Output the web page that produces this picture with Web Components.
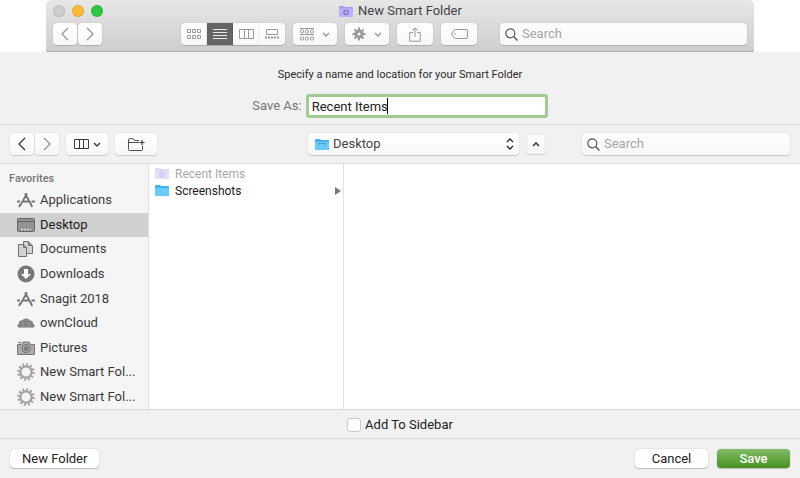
<!DOCTYPE html>
<html lang="en">
<head>
<meta charset="utf-8">
<title>New Smart Folder</title>
<style>
  body {
    margin: 0;
    background: #fff;
    color: #2b2b2b;
    font: 13px/16px Roboto, "Liberation Sans", sans-serif;
  }
</style>
</head>
<body>
<smart-folder-app></smart-folder-app>

<script>
// name: [width, height, svg content]
const ICONS = {
  back: [8, 14, '<path d="M7 1 1 7l6 6" fill="none" stroke="currentColor" stroke-width="1.4"/>'],
  forward: [8, 14, '<path d="m1 1 6 6-6 6" fill="none" stroke="currentColor" stroke-width="1.4"/>'],
  down: [8, 5, '<path d="m1 1 3 3 3-3" fill="none" stroke="currentColor" stroke-width="1.4"/>'],
  up: [8, 5, '<path d="m1 4 3-3 3 3" fill="none" stroke="currentColor" stroke-width="1.6"/>'],
  updown: [8, 12, '<path d="m1 4 3-3 3 3M1 8l3 3 3-3" fill="none" stroke="currentColor" stroke-width="1.4"/>'],
  grid: [14, 10, '<path d="M.5.5h3v3h-3zM5.5.5h3v3h-3zM10.5.5h3v3h-3zM.5 6.5h3v3h-3zM5.5 6.5h3v3h-3zM10.5 6.5h3v3h-3z" fill="none" stroke="currentColor"/>'],
  list: [14, 10, '<path d="M0 .5h14M0 3.5h14M0 6.5h14M0 9.5h14" stroke="currentColor"/>'],
  columns: [15, 10, '<path d="M.5.5h14v9H.5zM5.5.5v9M9.5.5v9" fill="none" stroke="currentColor"/>'],
  gallery: [14, 10, '<path d="M1.5.5h11v5h-11z" fill="none" stroke="currentColor"/><path d="M0 8.5h14" stroke="currentColor" stroke-width="2" stroke-dasharray="2 1"/>'],
  group: [14, 13, '<path d="M0 .5h14M0 6.5h14" stroke="currentColor"/><g fill="none" stroke="currentColor"><rect x=".5" y="2" width="3" height="3" rx="1"/><rect x="5.5" y="2" width="3" height="3" rx="1"/><rect x="10.5" y="2" width="3" height="3" rx="1"/><rect x=".5" y="9" width="3" height="3" rx="1"/><rect x="5.5" y="9" width="3" height="3" rx="1"/><rect x="10.5" y="9" width="3" height="3" rx="1"/></g>'],
  gear: [14, 14, '<path d="M7 .5v13M.5 7h13M2.4 2.4l9.2 9.2M11.6 2.4l-9.2 9.2" stroke="currentColor" stroke-width="2"/><circle cx="7" cy="7" r="3.4" fill="none" stroke="currentColor" stroke-width="2.4"/><circle cx="7" cy="7" r="1.6" fill="#fafafa"/>'],
  share: [12, 15, '<path d="M4 5.5H.8v8.700h10.400V5.5H8M6 10V1M3.5 3.5 6 1l2.5 2.5" fill="none" stroke="currentColor"/>'],
  tag: [17, 10, '<path d="M4.5.5H15q1.5 0 1.5 1.5v6q0 1.5-1.5 1.5H4.5Q3.5 9.5 2.5 8L.5 5l2-3q1-1.5 2-1.5z" fill="none" stroke="currentColor"/><circle cx="4" cy="5" r=".8" fill="currentColor"/>'],
  search: [13, 13, '<circle cx="5.3" cy="5.3" r="4.5" fill="none" stroke="currentColor" stroke-width="1.2"/><path d="m8.6 8.6 3.8 3.8" stroke="currentColor" stroke-width="1.4"/>'],
  newfolder: [17, 13, '<path d="M11 2.5H6.5L5.5.8h-4q-1 0-1 1v9.700q0 1 1 1h12q1 0 1-1V8M.5 4.5H11" fill="none" stroke="currentColor" stroke-width=".9"/><path d="M14 2v5M11.5 4.5h5" stroke="currentColor" stroke-width="1.2"/>'],
  arrow: [6, 8, '<path d="m0 0 6 4-6 4z" fill="currentColor"/>'],
  folder: [16, 13, '<path d="M1 3V2q0-1 1-1h4l1 1h7q1 0 1 1v8q0 1-1 1H2q-1 0-1-1z" fill="#46b4e8"/><path d="M1 4h14v7q0 1-1 1H2q-1 0-1-1z" fill="#6bcbf8"/>'],
  desktopfolder: [16, 13, '<path d="M1 3V2q0-1 1-1h4l1 1h7q1 0 1 1v8q0 1-1 1H2q-1 0-1-1z" fill="#46b4e8"/><path d="M1 4h14v7q0 1-1 1H2q-1 0-1-1z" fill="#6bcbf8"/><path d="M4 5.5h8" stroke="#3fa3d9"/><path d="M4.5 6v2.500M11.5 6v2.500" stroke="#57b7e8"/>'],
  smart: [16, 13, '<path d="M1 3V2q0-1 1-1h4l1 1h7q1 0 1 1v8q0 1-1 1H2q-1 0-1-1z" fill="#a79cea"/><path d="M1 3.5h14V11q0 1-1 1H2q-1 0-1-1z" fill="#bdb2fa"/><circle cx="8" cy="7.5" r="2.100" fill="none" stroke="#8172d8" stroke-width="1.4"/>'],
  apps: [18, 16, '<g fill="none" stroke="currentColor" stroke-width="1.8"><path d="M8 1.5 13.8 12M10 1.5 3.2 13.5"/><path d="M0 9.5h3M6 9.5h6M14.5 9.5H18"/><path d="m13.5 11.5 1.700 3.5M3.5 12l-1.5 3"/></g><path d="M7 5.5h4" stroke="currentColor"/>'],
  desktop: [18, 16, '<rect x=".5" y="1.5" width="17" height="13" rx="1" fill="#929292" stroke="#666"/><path d="M1 4.5h16" stroke="#666"/><path d="M4 12.5h10" stroke="#ddd" stroke-width="1.5" stroke-dasharray="2 1"/>'],
  documents: [18, 16, '<g fill="#d2d2d2" stroke="#707070"><path d="M6.5.5h5l4 4v8h-9z"/><path d="M11.5.5v4h4" fill="#999"/><path d="M1.5 3.5h5l3 3v9h-8z"/><path d="M6.5 3.5v3h3" fill="#999"/></g>'],
  downloads: [18, 18, '<circle cx="9" cy="9" r="8.500" fill="#777"/><path d="M7 4h4v5h3l-5 5-5-5h3z" fill="#fff"/>'],
  cloud: [18, 10, '<g fill="#838383"><circle cx="9" cy="4.500" r="4"/><circle cx="4.800" cy="5" r="2.800"/><circle cx="13.200" cy="5.200" r="2.800"/><circle cx="2.300" cy="7.700" r="1.900"/><circle cx="15.700" cy="7.700" r="1.900"/><path d="M2.300 5.500h13.400v4.100H2.300z"/></g><path d="M6.200 3.500q-1.800 2.500 0 5M12 4q1.500 2 0 4" fill="none" stroke="#ababab" stroke-width=".7"/>'],
  camera: [18, 14, '<path d="M.5 3.5h4L6 1h6l1.5 2.5h4v10H.5z" fill="#aaa" stroke="#777"/><path d="M1.5 1.5h2.5" stroke="#777" stroke-width="1.5"/><circle cx="9" cy="7.5" r="4" fill="#bbb" stroke="#666"/><circle cx="9" cy="7.5" r="2" fill="#888" stroke="#666"/>'],
  cog: [18, 18, '<circle cx="9" cy="9" r="7.6" fill="none" stroke="currentColor" stroke-width="2.4" stroke-dasharray="2 1.980"/><circle cx="9" cy="9" r="5.6" fill="none" stroke="currentColor" stroke-width="2.2"/>'],
};

function icon(name) {
  const [w, h, body] = ICONS[name];
  return `<svg width="${w}" height="${h}" viewBox="0 0 ${w} ${h}" aria-hidden="true">${body}</svg>`;
}

class MacIcon extends HTMLElement {
  constructor() {
    super();
    this.attachShadow({ mode: 'open' });
  }

  connectedCallback() {
    this.shadowRoot.innerHTML = `
      <style>
        :host { display: inline-flex; flex: none; align-items: center; justify-content: center; }
        svg { display: block; }
      </style>
      ${icon(this.getAttribute('name'))}
    `;
  }
}

class ToolButton extends HTMLElement {
  constructor() {
    super();
    this.attachShadow({ mode: 'open' });
  }

  connectedCallback() {
    const label = this.getAttribute('label') || '';
    this.shadowRoot.innerHTML = `
      <style>
        :host { display: block; flex: none; width: 24px; height: 22px; color: #999; }
        :host([wide]) { width: 36px; }
        :host([menu]) { width: 44px; }
        :host([view]) { width: 26px; }
        :host([dark]) { color: #3c3c3c; }
        button {
          display: flex;
          align-items: center;
          justify-content: center;
          gap: 8px;
          width: 100%;
          height: 100%;
          padding: 0;
          border: 0;
          border-radius: 4px;
          color: inherit;
          background: linear-gradient(#fff, #f7f7f7);
          box-shadow: 0 0 1px rgba(0, 0, 0, 0.3), 0 1px 1px rgba(0, 0, 0, 0.14);
        }
        :host([tight]) button { gap: 4px; }
        :host([view]) button { border-radius: 0; }
        :host([view="first"]) button { border-radius: 4px 0 0 4px; }
        :host([view="last"]) button { border-radius: 0 4px 4px 0; }
        :host([pressed]) button { background: #656565; color: #e8e8e8; }
      </style>
      <button type="button" aria-label="${label}"><slot></slot></button>
    `;
  }
}

class PushButton extends HTMLElement {
  constructor() {
    super();
    this.attachShadow({ mode: 'open' });
  }

  connectedCallback() {
    this.shadowRoot.innerHTML = `
      <style>
        :host { display: block; }
        button {
          min-width: 73px;
          height: 19px;
          padding: 0 12px;
          border: 0;
          border-radius: 4px;
          font: inherit;
          color: #222;
          background: #fff;
          box-shadow: 0 0 1px rgba(0, 0, 0, 0.35), 0 1px 1px rgba(0, 0, 0, 0.18);
        }
        :host([primary]) button {
          color: #fff;
          font-weight: 500;
          background: linear-gradient(#84bd68, #45911f);
        }
      </style>
      <button type="button"><slot></slot></button>
    `;
  }
}

class SearchField extends HTMLElement {
  constructor() {
    super();
    this.attachShadow({ mode: 'open' });
  }

  connectedCallback() {
    this.shadowRoot.innerHTML = `
      <style>
        :host { display: block; min-width: 0; }
        label {
          display: flex;
          align-items: center;
          gap: 4px;
          height: 22px;
          padding: 0 5px;
          border-radius: 4px;
          color: #555;
          background: linear-gradient(#fdfdfd, #f8f8f8);
          box-shadow: 0 0 1px rgba(0, 0, 0, 0.3), 0 1px 1px rgba(0, 0, 0, 0.14);
        }
        input {
          flex: 1;
          min-width: 0;
          padding: 0;
          border: 0;
          outline: 0;
          background: none;
          font: inherit;
        }
        input::placeholder { color: #a6a6a6; opacity: 1; }
      </style>
      <label>
        <mac-icon name="search"></mac-icon>
        <input type="text" placeholder="Search" aria-label="Search">
      </label>
    `;
  }
}

class FinderHeader extends HTMLElement {
  constructor() {
    super();
    this.attachShadow({ mode: 'open' });
  }

  connectedCallback() {
    this.shadowRoot.innerHTML = `
      <style>
        :host {
          display: block;
          margin: 0 46px;
          padding: 0 7px 6px;
          border-bottom: 1px solid #b4b4b4;
          border-radius: 5px 5px 0 0;
          background: linear-gradient(#e7e7e7, #cecece);
        }
        .title {
          display: grid;
          grid-template-columns: 1fr auto 1fr;
          align-items: center;
          height: 22px;
          margin-bottom: 1px;
          color: #444;
        }
        .lights, .name, .tools, .group { display: flex; align-items: center; }
        .lights { gap: 7px; }
        .lights i {
          box-sizing: border-box;
          width: 12px;
          height: 12px;
          border-radius: 50%;
          border: 1px solid rgba(0, 0, 0, 0.1);
          background: #cdcdcd;
        }
        .lights .min { background: #fdb937; }
        .lights .max { background: #2bc840; }
        .name { gap: 4px; }
        .tools { gap: 8px; }
        .group { gap: 1px; }
        .views { gap: 0; margin-left: 71px; }
        search-field { flex: 1; margin-left: 15px; }
      </style>
      <div class="title">
        <div class="lights"><i></i><i class="min"></i><i class="max"></i></div>
        <div class="name"><mac-icon name="smart"></mac-icon><slot></slot></div>
      </div>
      <div class="tools">
        <div class="group">
          <tool-button label="Back"><mac-icon name="back"></mac-icon></tool-button>
          <tool-button label="Forward"><mac-icon name="forward"></mac-icon></tool-button>
        </div>
        <div class="group views">
          <tool-button view="first" label="Icons"><mac-icon name="grid"></mac-icon></tool-button>
          <tool-button view="mid" pressed label="List"><mac-icon name="list"></mac-icon></tool-button>
          <tool-button view="mid" label="Columns"><mac-icon name="columns"></mac-icon></tool-button>
          <tool-button view="last" label="Gallery"><mac-icon name="gallery"></mac-icon></tool-button>
        </div>
        <tool-button menu label="Group"><mac-icon name="group"></mac-icon><mac-icon name="down"></mac-icon></tool-button>
        <tool-button menu label="Action"><mac-icon name="gear"></mac-icon><mac-icon name="down"></mac-icon></tool-button>
        <tool-button wide label="Share"><mac-icon name="share"></mac-icon></tool-button>
        <tool-button wide label="Tags"><mac-icon name="tag"></mac-icon></tool-button>
        <search-field></search-field>
      </div>
    `;
  }
}

class SaveName extends HTMLElement {
  constructor() {
    super();
    this.attachShadow({ mode: 'open' });
  }

  connectedCallback() {
    this.shadowRoot.innerHTML = `
      <style>
        :host { display: block; padding: 15px 10px 6px; text-align: center; }
        p { margin: 0 0 11px; font-size: 11px; }
        .row { display: flex; align-items: center; justify-content: center; gap: 4px; }
        label { color: #777; }
        .field { position: relative; }
        input {
          display: block;
          box-sizing: border-box;
          width: 242px;
          height: 24px;
          padding: 0 3px;
          border: 3px solid #a2cb94;
          border-radius: 3px;
          outline: 0;
          background: #fff;
          color: #222;
          font: inherit;
        }
        .caret {
          position: absolute;
          top: 4px;
          left: 81px;
          width: 1px;
          height: 16px;
          background: #000;
        }
      </style>
      <p>Specify a name and location for your Smart Folder</p>
      <div class="row">
        <label for="name">Save As:</label>
        <div class="field">
          <input id="name" type="text" value="Recent Items">
          <span class="caret"></span>
        </div>
      </div>
    `;
  }
}

class LocationBar extends HTMLElement {
  constructor() {
    super();
    this.attachShadow({ mode: 'open' });
  }

  connectedCallback() {
    this.shadowRoot.innerHTML = `
      <style>
        :host {
          display: grid;
          grid-template-columns: 298fr 274fr 208fr;
          align-items: center;
          padding: 8px 10px;
          border-top: 1px solid #d9dcd9;
          border-bottom: 1px solid #dedede;
        }
        div { display: flex; align-items: center; }
        .left { gap: 7px; }
        .left tool-button[menu] { width: 42px; }
        .nav { gap: 1px; }
        .middle { gap: 8px; padding-right: 37px; }
        .popup { position: relative; flex: 1; }
        .popup mac-icon { position: absolute; left: 6px; pointer-events: none; }
        .popup mac-icon[name="updown"] { left: auto; right: 5px; }
        select {
          appearance: none;
          width: 100%;
          height: 22px;
          padding: 0 20px 0 25px;
          border: 0;
          border-radius: 4px;
          color: #444;
          background: linear-gradient(#fff, #f8f8f8);
          box-shadow: 0 0 1px rgba(0, 0, 0, 0.3), 0 1px 1px rgba(0, 0, 0, 0.14);
          font: inherit;
        }
        .up { width: 18px; height: 19px; }
      </style>
      <div class="left">
        <div class="nav">
          <tool-button dark label="Back"><mac-icon name="back"></mac-icon></tool-button>
          <tool-button label="Forward"><mac-icon name="forward"></mac-icon></tool-button>
        </div>
        <tool-button menu tight dark label="View"><mac-icon name="columns"></mac-icon><mac-icon name="down"></mac-icon></tool-button>
        <tool-button menu dark label="New Folder"><mac-icon name="newfolder"></mac-icon></tool-button>
      </div>
      <div class="middle">
        <div class="popup">
          <select aria-label="Location"><option>Desktop</option></select>
          <mac-icon name="desktopfolder"></mac-icon>
          <mac-icon name="updown"></mac-icon>
        </div>
        <tool-button class="up" dark label="Collapse"><mac-icon name="up"></mac-icon></tool-button>
      </div>
      <search-field></search-field>
    `;
  }
}

class SideItem extends HTMLElement {
  constructor() {
    super();
    this.attachShadow({ mode: 'open' });
  }

  connectedCallback() {
    this.shadowRoot.innerHTML = `
      <style>
        :host { display: flex; flex: 1; min-height: 24px; color: #3a3a3a; }
        :host([selected]) { background: #d0d0d0; color: #1c1c1c; }
        a {
          display: flex;
          flex: 1;
          align-items: center;
          gap: 5px;
          min-width: 0;
          padding: 0 10px 0 17px;
          color: inherit;
          text-decoration: none;
        }
        mac-icon { width: 18px; color: #777; }
        mac-icon[name="cog"] { color: #a2a2a2; }
        span { white-space: nowrap; }
      </style>
      <a href="#">
        <mac-icon name="${this.getAttribute('icon')}"></mac-icon>
        <span><slot></slot></span>
      </a>
    `;
  }
}

class FileRow extends HTMLElement {
  constructor() {
    super();
    this.attachShadow({ mode: 'open' });
  }

  connectedCallback() {
    const arrow = this.hasAttribute('open') ? '<mac-icon class="arrow" name="arrow"></mac-icon>' : '';
    this.shadowRoot.innerHTML = `
      <style>
        :host { display: block; color: #1c1c1c; }
        :host([disabled]) { opacity: 0.4; }
        a {
          display: flex;
          align-items: center;
          gap: 5px;
          height: 17px;
          padding: 0 2px 0 5px;
          color: inherit;
          font-size: 12px;
          text-decoration: none;
        }
        .arrow { margin-left: auto; color: #777; }
      </style>
      <a href="#">
        <mac-icon name="${this.getAttribute('icon')}"></mac-icon>
        <span><slot></slot></span>
        ${arrow}
      </a>
    `;
  }
}

class FileBrowser extends HTMLElement {
  constructor() {
    super();
    this.attachShadow({ mode: 'open' });
  }

  connectedCallback() {
    this.shadowRoot.innerHTML = `
      <style>
        :host { display: flex; background: #fff; }
        nav {
          display: flex;
          flex: none;
          flex-direction: column;
          width: 148px;
          border-right: 1px solid #e2e2e2;
          background: #f5f5f5;
        }
        h2 {
          margin: 0;
          padding: 7px 9px 1px;
          color: #777;
          font-size: 11px;
          font-weight: 500;
        }
        .column {
          flex: none;
          box-sizing: border-box;
          width: 195px;
          padding-top: 1px;
          border-right: 1px solid #e2e2e2;
        }
      </style>
      <nav>
        <h2>Favorites</h2>
        <side-item icon="apps">Applications</side-item>
        <side-item icon="desktop" selected>Desktop</side-item>
        <side-item icon="documents">Documents</side-item>
        <side-item icon="downloads">Downloads</side-item>
        <side-item icon="apps">Snagit 2018</side-item>
        <side-item icon="cloud">ownCloud</side-item>
        <side-item icon="camera">Pictures</side-item>
        <side-item icon="cog">New Smart Fol...</side-item>
        <side-item icon="cog">New Smart Fol...</side-item>
      </nav>
      <div class="column">
        <file-row icon="smart" disabled>Recent Items</file-row>
        <file-row icon="folder" open>Screenshots</file-row>
      </div>
    `;
  }
}

class PanelFooter extends HTMLElement {
  constructor() {
    super();
    this.attachShadow({ mode: 'open' });
  }

  connectedCallback() {
    this.shadowRoot.innerHTML = `
      <style>
        :host { display: block; }
        .option {
          display: flex;
          align-items: center;
          justify-content: center;
          padding: 7px 10px 5px;
          border-top: 1px solid #dadada;
        }
        label { display: flex; align-items: center; gap: 4px; color: #222; }
        input {
          appearance: none;
          box-sizing: border-box;
          width: 14px;
          height: 14px;
          margin: 0;
          border: 1px solid #cacaca;
          border-radius: 3px;
          background: #fff;
        }
        .actions {
          display: flex;
          gap: 9px;
          padding: 10px;
          border-top: 1px solid #dadada;
        }
        .new { margin-right: auto; }
      </style>
      <div class="option">
        <label><input type="checkbox">Add To Sidebar</label>
      </div>
      <div class="actions">
        <push-button class="new">New Folder</push-button>
        <push-button>Cancel</push-button>
        <push-button primary>Save</push-button>
      </div>
    `;
  }
}

class SmartFolderApp extends HTMLElement {
  constructor() {
    super();
    this.attachShadow({ mode: 'open' });
  }

  connectedCallback() {
    this.shadowRoot.innerHTML = `
      <style>
        :host { display: flex; flex-direction: column; min-height: 100vh; }
        main { display: flex; flex: 1; flex-direction: column; background: #f1f1f1; }
        file-browser { flex: 1; }
      </style>
      <finder-header>New Smart Folder</finder-header>
      <main>
        <save-name></save-name>
        <location-bar></location-bar>
        <file-browser></file-browser>
        <panel-footer></panel-footer>
      </main>
    `;
  }
}

customElements.define('mac-icon', MacIcon);
customElements.define('tool-button', ToolButton);
customElements.define('push-button', PushButton);
customElements.define('search-field', SearchField);
customElements.define('finder-header', FinderHeader);
customElements.define('save-name', SaveName);
customElements.define('location-bar', LocationBar);
customElements.define('side-item', SideItem);
customElements.define('file-row', FileRow);
customElements.define('file-browser', FileBrowser);
customElements.define('panel-footer', PanelFooter);
customElements.define('smart-folder-app', SmartFolderApp);
</script>
</body>
</html>
